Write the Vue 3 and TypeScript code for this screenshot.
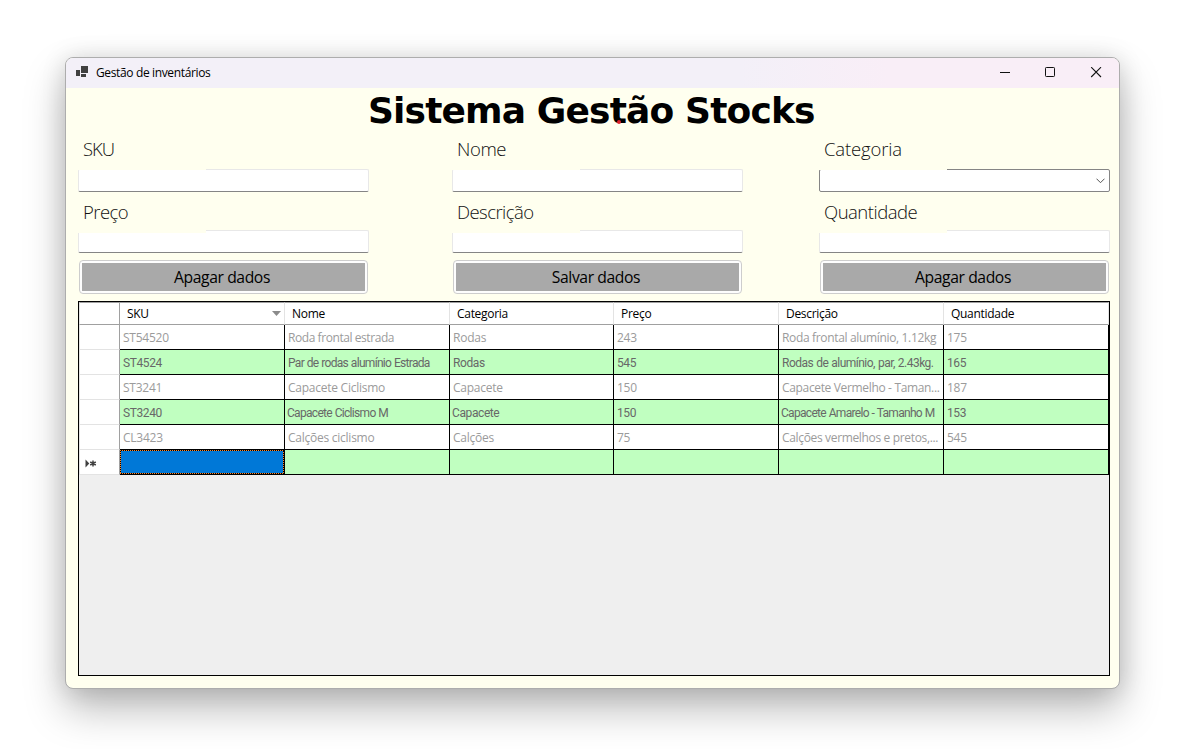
<script setup lang="ts">
interface Product {
  sku: string
  nome: string
  categoria: string
  preco: string
  descricao: string
  quantidade: string
}

interface Field {
  label: string
  kind: 'text' | 'select'
}

const fields: Field[] = [
  { label: 'SKU', kind: 'text' },
  { label: 'Nome', kind: 'text' },
  { label: 'Categoria', kind: 'select' },
  { label: 'Preço', kind: 'text' },
  { label: 'Descrição', kind: 'text' },
  { label: 'Quantidade', kind: 'text' },
]

const actions: string[] = ['Apagar dados', 'Salvar dados', 'Apagar dados']

const columns: { key: keyof Product; title: string }[] = [
  { key: 'sku', title: 'SKU' },
  { key: 'nome', title: 'Nome' },
  { key: 'categoria', title: 'Categoria' },
  { key: 'preco', title: 'Preço' },
  { key: 'descricao', title: 'Descrição' },
  { key: 'quantidade', title: 'Quantidade' },
]

const products: Product[] = [
  { sku: 'ST54520', nome: 'Roda frontal estrada', categoria: 'Rodas', preco: '243', descricao: 'Roda frontal alumínio, 1.12kg', quantidade: '175' },
  { sku: 'ST4524', nome: 'Par de rodas alumínio Estrada', categoria: 'Rodas', preco: '545', descricao: 'Rodas de alumínio, par, 2.43kg.', quantidade: '165' },
  { sku: 'ST3241', nome: 'Capacete Ciclismo', categoria: 'Capacete', preco: '150', descricao: 'Capacete Vermelho - Taman...', quantidade: '187' },
  { sku: 'ST3240', nome: 'Capacete Ciclismo M', categoria: 'Capacete', preco: '150', descricao: 'Capacete Amarelo - Tamanho M', quantidade: '153' },
  { sku: 'CL3423', nome: 'Calções ciclismo', categoria: 'Calções', preco: '75', descricao: 'Calções vermelhos e pretos,...', quantidade: '545' },
]
</script>

<template>
  <div class="desktop">
    <div class="window">
      <header class="titlebar">
        <svg class="app-icon" width="12" height="11" viewBox="0 0 12 11" shape-rendering="crispEdges">
          <rect x="0" y="4" width="4" height="6" fill="#404040" />
          <rect x="5" y="0" width="7" height="7" fill="#404040" />
          <rect x="5" y="8" width="5" height="3" fill="#404040" />
        </svg>
        <span class="caption">Gestão de inventários</span>
        <svg class="controls" width="102" height="11" viewBox="0 0 102 11" fill="none" stroke="#111">
          <path d="M0 5.5H10" />
          <rect x="45.5" y="0.5" width="9" height="9" rx="0.8" />
          <path d="M91.2 .2L101 10M101 .2L91.2 10" stroke-width="1.1" />
        </svg>
      </header>

      <main class="client">
        <h1 class="heading">Sistema Gestão Stocks<i class="dot"></i></h1>

        <section class="form">
          <div v-for="field in fields" :key="field.label" class="field">
            <label class="label">{{ field.label }}</label>
            <div class="input" :class="field.kind">
              <svg v-if="field.kind === 'select'" width="9" height="6" viewBox="0 0 9 6" fill="none" stroke="#555">
                <path d="M.5 .7L4.5 4.7L8.5 .7" />
              </svg>
            </div>
          </div>
        </section>

        <section class="actions">
          <button v-for="(action, i) in actions" :key="i" class="button">
            <span>{{ action }}</span>
          </button>
        </section>

        <section class="grid">
          <div class="row head">
            <div class="stub"></div>
            <div v-for="col in columns" :key="col.key" class="th">
              <span>{{ col.title }}</span>
              <svg v-if="col.key === 'sku'" width="9" height="5" viewBox="0 0 9 5">
                <path d="M0 0H9L4.5 5Z" fill="#8b8b8b" />
              </svg>
            </div>
          </div>
          <div v-for="(p, i) in products" :key="p.sku" class="row" :class="{ alt: i % 2 === 1 }">
            <div class="stub"></div>
            <div v-for="col in columns" :key="col.key" class="td" :class="col.key">{{ p[col.key] }}</div>
          </div>
          <div class="row alt">
            <div class="stub">
              <svg class="marker" width="12" height="9" viewBox="0 0 12 9">
                <path d="M.5 .5L4.3 4.5L.5 8.5Z" fill="#404040" />
                <path d="M8 1.4V7.6M5.2 3L10.8 6M5.2 6L10.8 3" stroke="#404040" stroke-width="1.5" />
              </svg>
            </div>
            <div v-for="col in columns" :key="col.key" class="td" :class="{ selected: col.key === 'sku' }"></div>
          </div>
        </section>
      </main>
    </div>
  </div>
</template>

<style>
body {
  margin: 0;
  background: #fff;
  overflow: hidden;
}
</style>

<style scoped>
.desktop {
  box-sizing: border-box;
  width: 1199px;
  height: 749px;
  padding: 57px 79px 60px 65px;
  background: #fff;
  overflow: hidden;
  font-family: 'Open Sans', 'Noto Sans', sans-serif;
  color: #000;
}

.window {
  box-sizing: border-box;
  width: 1055px;
  height: 632px;
  border: 1px solid #adadad;
  border-radius: 8px;
  background: #ffffef;
  background-clip: padding-box;
  box-shadow: 0 20px 40px rgba(0, 0, 0, 0.27), 0 1px 24px rgba(0, 0, 0, 0.13);
}

.titlebar {
  display: flex;
  align-items: flex-start;
  height: 30px;
  border-radius: 7px 7px 0 0;
  background: linear-gradient(90deg, #f3f0f8 0%, #f3f0f8 64%, #f9eef7 78%, #f9eef7 100%);
}

.app-icon {
  margin: 8px 0 0 10px;
}

.caption {
  margin: 6px auto 0 8px;
  font-size: 12px;
  line-height: 18px;
  letter-spacing: -0.36px;
}

.controls {
  margin: 9px 17px 0 0;
}

.client {
  display: flex;
  flex-direction: column;
  padding: 0 9px 0 12px;
}

.heading {
  position: relative;
  align-self: flex-start;
  margin: 0 0 0 290px;
  height: 49px;
  font: bold 36px/46px 'DejaVu Sans', Verdana, sans-serif;
  letter-spacing: -0.85px;
  white-space: nowrap;
}

.dot {
  position: absolute;
  left: 249px;
  top: 32px;
  width: 4px;
  height: 4px;
  border-radius: 50%;
  background: #e0202c;
}

.form,
.actions {
  display: grid;
  grid-template-columns: 291px 291px 291px;
  column-gap: 83px;
}

.form > :nth-child(3n),
.actions > :nth-child(3n) {
  margin-left: -7px;
  margin-right: 7px;
}

.form {
  grid-template-rows: 55px 61px;
}

.field {
  display: flex;
  flex-direction: column;
  justify-content: flex-end;
}

.label {
  position: relative;
  z-index: 1;
  box-sizing: border-box;
  width: 128px;
  height: 33px;
  margin-bottom: -1px;
  padding-left: 5px;
  background: #ffffef;
  font-size: 18.5px;
  font-weight: 300;
  line-height: 23px;
  letter-spacing: -0.4px;
  color: #111;
}

.field:nth-child(1) .label {
  letter-spacing: -1px;
}

.field:nth-child(3) .label {
  letter-spacing: -0.15px;
}

.field:nth-child(n + 4) .label {
  margin-bottom: -3px;
  letter-spacing: -0.55px;
}

.field:nth-child(6) .label {
  letter-spacing: -0.5px;
}

.input {
  box-sizing: border-box;
  height: 23px;
  flex: none;
  border: 1px solid #e8e8e8;
  border-bottom-color: #858585;
  border-radius: 2px;
  background: #fff;
}

.input.select {
  display: flex;
  align-items: center;
  justify-content: flex-end;
  padding-right: 4px;
  border-color: #858585;
}

.actions {
  margin-top: 7px;
}

.button {
  box-sizing: border-box;
  width: 289px;
  height: 34px;
  margin-left: 1px;
  padding: 2px;
  border: 1px solid #cdcdcd;
  border-radius: 4px;
  background: #fdfdfd;
  font-family: inherit;
}

.actions > .button:nth-child(3n) {
  margin-left: -6px;
}

.button span {
  display: block;
  box-sizing: border-box;
  height: 28px;
  padding-right: 3px;
  background: #a9a9a9;
  font-size: 15.7px;
  line-height: 29px;
  letter-spacing: -0.4px;
  color: #000;
}

.grid {
  box-sizing: border-box;
  width: 1032px;
  height: 375px;
  margin-top: 7px;
  border: 1px solid #000;
  background: #efefef;
}

.row {
  display: grid;
  grid-template-columns: 41px 165px 165px 164px 165px 165px 165px;
  height: 25px;
}

.stub {
  box-sizing: border-box;
  display: flex;
  align-items: center;
  padding-left: 5px;
  border-left: 1px solid #e3e3e3;
  border-right: 1px solid #a0a0a0;
  border-bottom: 1px solid #e3e3e3;
  background: #fff;
}

.marker {
  margin-top: 3px;
}

.td {
  box-sizing: border-box;
  padding-left: 3px;
  border-right: 1px solid #000;
  border-bottom: 1px solid #000;
  background: #fff;
  font-size: 12px;
  line-height: 26px;
  letter-spacing: -0.25px;
  white-space: nowrap;
  overflow: hidden;
  color: #9b9b9b;
}

.td.descricao {
  letter-spacing: -0.34px;
}

.row:nth-child(2) .nome {
  letter-spacing: -0.43px;
}

.alt .td {
  background: #c0ffc0;
  font-family: Roboto, 'Liberation Sans', sans-serif;
  line-height: 27px;
  letter-spacing: -0.4px;
  color: #686868;
}

.alt .td.nome,
.alt .td.descricao {
  letter-spacing: -0.7px;
  word-spacing: 0.5px;
}

.alt:nth-child(3) .td.descricao {
  letter-spacing: -0.51px;
}

.alt:nth-child(5) .td {
  padding-left: 2px;
}

.alt:nth-child(5) .td.sku,
.alt:nth-child(5) .td.preco,
.alt:nth-child(5) .td.quantidade {
  padding-left: 3px;
}

.alt .td.selected {
  position: relative;
  background: #000;
}

.selected::before {
  content: '';
  position: absolute;
  inset: 0;
  background:
    repeating-linear-gradient(90deg, #ff8728 0 1px, #000 1px 2px) top / 100% 1px no-repeat,
    repeating-linear-gradient(90deg, #ff8728 0 1px, #000 1px 2px) bottom / 100% 1px no-repeat,
    repeating-linear-gradient(180deg, #ff8728 0 1px, #000 1px 2px) left / 1px 100% no-repeat,
    repeating-linear-gradient(180deg, #ff8728 0 1px, #000 1px 2px) right / 1px 100% no-repeat,
    #0078d7;
}

.head {
  height: 23px;
}

.head .stub,
.th {
  border-top: 1px solid #a0a0a0;
  border-bottom: 1px solid #a0a0a0;
}

.th {
  box-sizing: border-box;
  display: flex;
  align-items: center;
  justify-content: space-between;
  padding: 0 3px 0 7px;
  border-right: 1px solid #e3e3e3;
  background: #fff;
  font-size: 12px;
  line-height: 20px;
  letter-spacing: -0.3px;
}
</style>
